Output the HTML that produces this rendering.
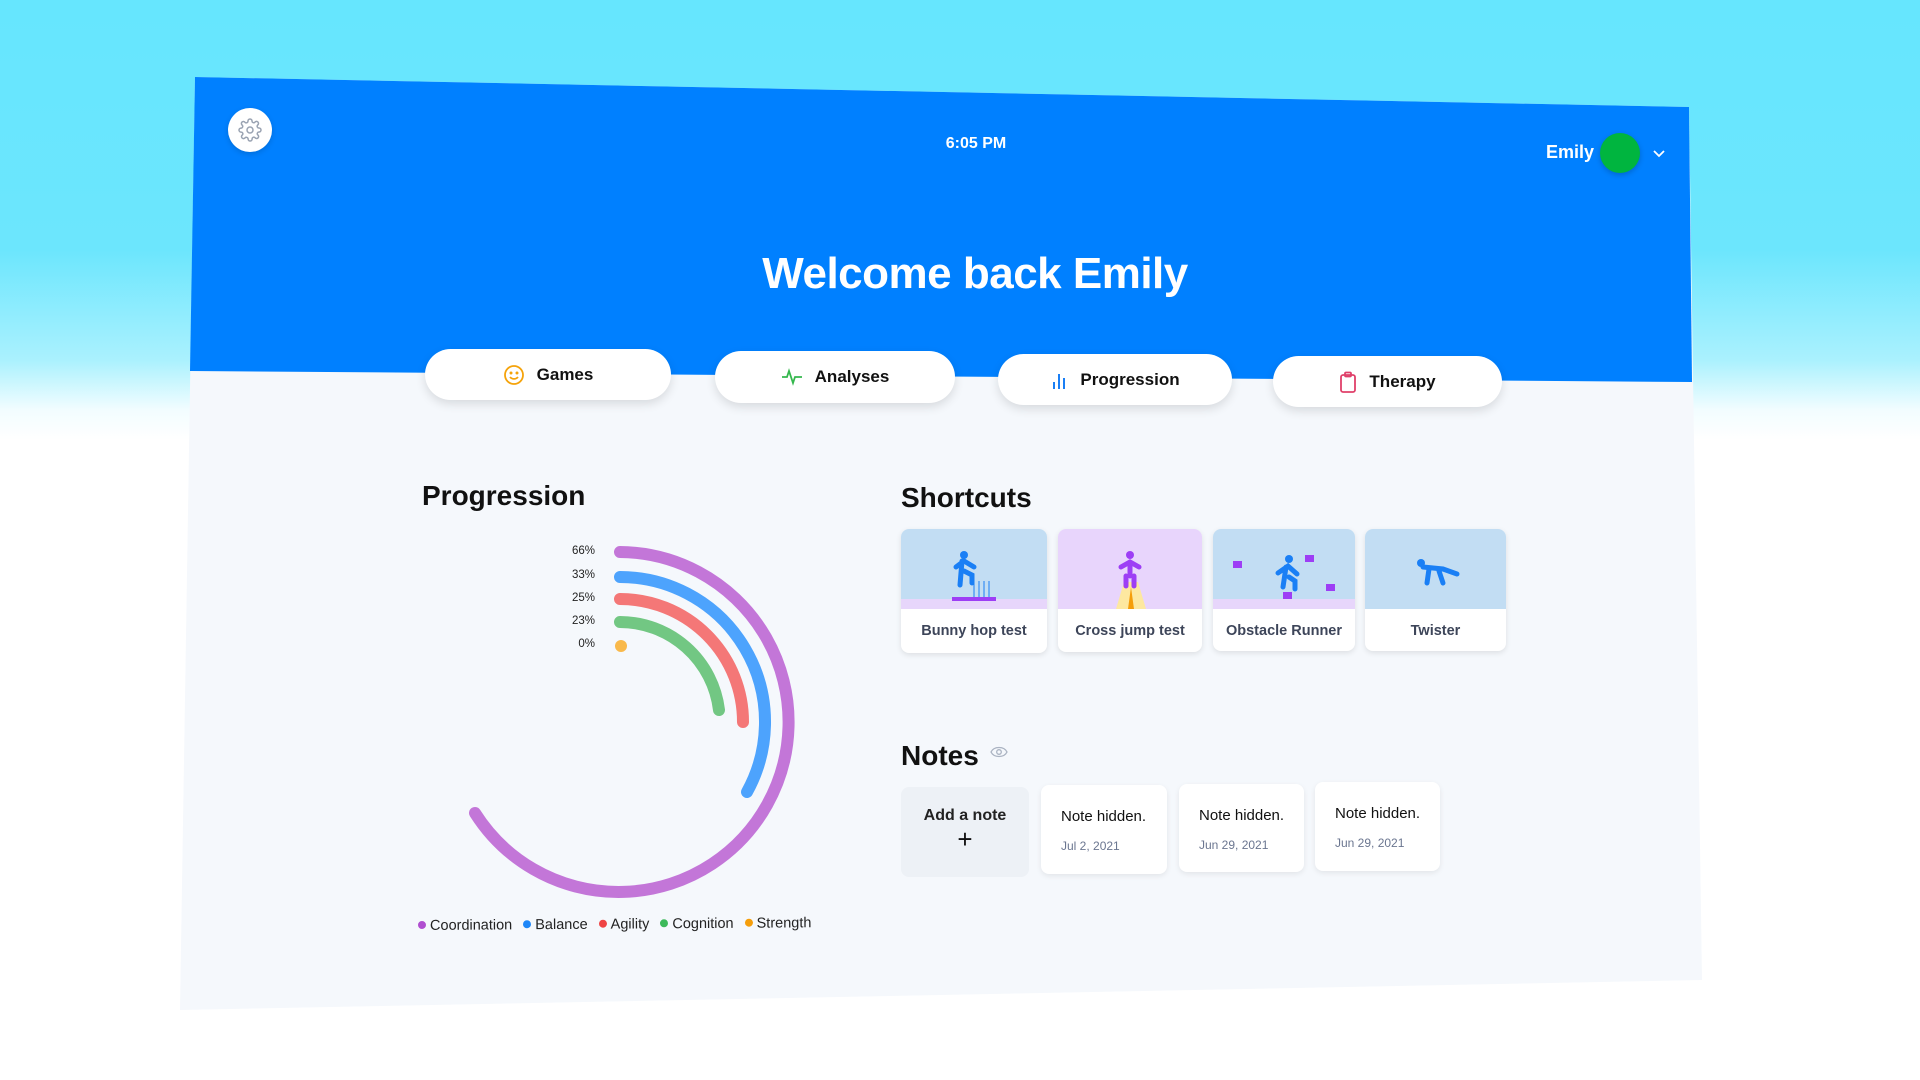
<!DOCTYPE html>
<html><head><meta charset="utf-8">
<style>
*{margin:0;padding:0;box-sizing:border-box}
html,body{width:1920px;height:1080px;overflow:hidden}
body{position:relative;font-family:"Liberation Sans",sans-serif;background:linear-gradient(180deg,#66e6fe 0px,#6ce6fd 250px,#aaf1fe 360px,#f2fdff 410px,#fff 440px,#fff 1080px);}
.abs{position:absolute}
#panel{left:0;top:0;width:1920px;height:1080px;background:#f5f8fc;clip-path:polygon(195px 77px,1689px 107px,1702px 980px,180px 1010px);}
#head{left:0;top:0;width:1920px;height:1080px;background:#0080ff;clip-path:polygon(195px 77px,1689px 107px,1692px 382px,190px 371px);}
.gear{left:228px;top:108px;width:44px;height:44px;border-radius:50%;background:#fff;box-shadow:0 2px 6px rgba(0,0,0,.15);display:flex;align-items:center;justify-content:center}
.time{left:900px;top:135px;width:152px;text-align:center;color:#fff;font-size:16px;font-weight:bold}
.emily{left:1546px;top:142px;color:#fff;font-size:18px;font-weight:bold}
.av{left:1600px;top:133px;width:40px;height:40px;border-radius:50%;background:#00b53f;box-shadow:0 2px 6px rgba(0,0,0,.2)}
.welcome{left:700px;top:249px;width:550px;text-align:center;color:#fff;font-size:44px;font-weight:bold;letter-spacing:-0.5px}
.tab{background:#fff;border-radius:26px;box-shadow:0 4px 10px rgba(0,0,0,.12);display:flex;align-items:center;justify-content:center;gap:12px;font-size:17px;font-weight:bold;color:#111}
h2{position:absolute;font-size:28px;font-weight:bold;color:#111}
.card{position:absolute;background:#fff;border-radius:8px;box-shadow:0 2px 6px rgba(0,0,0,.1);overflow:hidden}
.card .img{height:80px;position:relative}
.card .lbl{text-align:center;font-size:14.5px;font-weight:bold;color:#3d4559;padding-top:14px}
.note{position:absolute;background:#fff;border-radius:8px;box-shadow:0 2px 6px rgba(0,0,0,.08);padding:23px 0 0 20px}
.note .t{font-size:15px;color:#111}
.note .d{font-size:12px;color:#6b7690;margin-top:14px}
.pct{position:absolute;width:40px;text-align:right;font-size:11.5px;color:#222}
.leg{left:418px;top:918px;font-size:14.5px;color:#222;display:flex;gap:11px;transform:rotate(-0.4deg);transform-origin:left}
.leg span:before{content:"";display:inline-block;width:8px;height:8px;border-radius:50%;background:var(--c);margin-right:4px;vertical-align:1px}
</style></head><body>
<div id="panel" class="abs"></div>
<div id="head" class="abs"></div>

<div class="abs gear"><svg width="24" height="24" viewBox="0 0 24 24" fill="none" stroke="#9aa3b2" stroke-width="1.5"><circle cx="12" cy="12" r="3"/><path d="M19.4 15a1.7 1.7 0 0 0 .3 1.8l.1.1a2 2 0 1 1-2.8 2.8l-.1-.1a1.7 1.7 0 0 0-1.8-.3 1.7 1.7 0 0 0-1 1.5V21a2 2 0 1 1-4 0v-.1a1.7 1.7 0 0 0-1.100-1.5 1.7 1.7 0 0 0-1.8.3l-.1.1a2 2 0 1 1-2.8-2.8l.1-.1a1.7 1.7 0 0 0 .3-1.8 1.7 1.7 0 0 0-1.5-1H3a2 2 0 1 1 0-4h.1a1.7 1.7 0 0 0 1.5-1.100 1.7 1.7 0 0 0-.3-1.8l-.1-.1a2 2 0 1 1 2.8-2.8l.1.1a1.7 1.7 0 0 0 1.8.3H9a1.7 1.7 0 0 0 1-1.5V3a2 2 0 1 1 4 0v.1a1.7 1.7 0 0 0 1 1.5 1.7 1.7 0 0 0 1.8-.3l.1-.1a2 2 0 1 1 2.8 2.8l-.1.1a1.7 1.7 0 0 0-.3 1.8V9a1.7 1.7 0 0 0 1.5 1H21a2 2 0 1 1 0 4h-.1a1.7 1.7 0 0 0-1.5 1z"/></svg></div>
<div class="abs time">6:05 PM</div>
<div class="abs emily">Emily</div>
<div class="abs av"></div>
<svg class="abs" style="left:1652px;top:148px" width="14" height="10" viewBox="0 0 14 10"><path d="M2 3l5 5 5-5" stroke="#fff" stroke-width="1.8" fill="none"/></svg>
<div class="abs welcome">Welcome back Emily</div>

<div class="abs tab" style="left:425px;top:349px;width:246px;height:51px"><svg width="22" height="22" viewBox="0 0 22 22" fill="none" stroke="#f5a30a" stroke-width="1.8"><circle cx="11" cy="11" r="9"/><circle cx="8" cy="9" r=".6" fill="#f5a30a"/><circle cx="14" cy="9" r=".6" fill="#f5a30a"/><path d="M7 13c2 2.5 6 2.5 8 0"/></svg>Games</div>
<div class="abs tab" style="left:715px;top:351px;width:240px;height:52px"><svg width="22" height="22" viewBox="0 0 22 22" fill="none" stroke="#35b84e" stroke-width="1.8"><path d="M1 11h5l2-6 4 12 2-6h7"/></svg>Analyses</div>
<div class="abs tab" style="left:998px;top:354px;width:234px;height:51px"><svg width="18" height="20" viewBox="0 0 18 20" fill="none" stroke="#1a7ff5" stroke-width="2"><path d="M4 19v-7M9 19V4M14 19v-11"/></svg>Progression</div>
<div class="abs tab" style="left:1273px;top:356px;width:229px;height:51px"><svg width="18" height="22" viewBox="0 0 18 22" fill="none" stroke="#e0406a" stroke-width="1.8"><rect x="2" y="4" width="14" height="17" rx="2"/><rect x="6" y="1.5" width="6" height="4" rx="1"/></svg>Therapy</div>

<h2 style="left:422px;top:480px">Progression</h2>
<div class="pct" style="left:555px;top:545px">66%</div>
<div class="pct" style="left:555px;top:569px">33%</div>
<div class="pct" style="left:555px;top:592px">25%</div>
<div class="pct" style="left:555px;top:615px">23%</div>
<div class="pct" style="left:555px;top:638px">0%</div>
<svg class="abs" style="left:0;top:0" width="1920" height="1080" fill="none" stroke-linecap="round" stroke-width="12">
<path d="M620 552 A170 170 0 1 1 475 813" stroke="#c376d8"/>
<path d="M620 577 A145 145 0 0 1 747 792" stroke="#4da3fd"/>
<path d="M620 599 A123 123 0 0 1 743 722" stroke="#f47777"/>
<path d="M620 622 A100 100 0 0 1 719 710" stroke="#72c783"/>
<circle cx="621" cy="646" r="6" fill="#f9b94b" stroke="none"/>
</svg>
<div class="abs leg"><span style="--c:#b04fd0">Coordination</span><span style="--c:#1e87f8">Balance</span><span style="--c:#ef4444">Agility</span><span style="--c:#3cb95a">Cognition</span><span style="--c:#f59e0b">Strength</span></div>

<h2 style="left:901px;top:482px">Shortcuts</h2>
<div class="card" style="left:901px;top:529px;width:146px;height:124px"><div class="img" style="background:#c2ddf3"><div class="abs" style="left:0;bottom:0;width:100%;height:10px;background:#e7d6fb"></div>
<svg class="abs" style="left:45px;top:20px" width="60" height="55" viewBox="0 0 60 55"><circle cx="18" cy="6" r="4" fill="#1a7ff5"/><path d="M10 18l8-6 10 6M16 12l-2 24M18 22l8 4v8" stroke="#1a7ff5" stroke-width="5" fill="none" stroke-linecap="round"/><path d="M28 48V32M33 48V32M38 48V32M43 48V32" stroke="#1a7ff5" stroke-width="1"/><rect x="6" y="48" width="44" height="4" fill="#9d3ef5"/></svg></div><div class="lbl">Bunny hop test</div></div>
<div class="card" style="left:1058px;top:529px;width:144px;height:123px"><div class="img" style="background:#e8d5fc">
<svg class="abs" style="left:40px;top:20px" width="64" height="60" viewBox="0 0 64 60"><path d="M18 60l8-27h14l8 27z" fill="#fde8a0"/><path d="M30 60l3-22 3 22z" fill="#f59e0b"/><circle cx="32" cy="6" r="4" fill="#9d3ef5"/><path d="M23 18l9-5 9 5M32 13v14M28 27v10M36 27v10" stroke="#9d3ef5" stroke-width="5" fill="none" stroke-linecap="round"/></svg></div><div class="lbl">Cross jump test</div></div>
<div class="card" style="left:1213px;top:529px;width:142px;height:122px"><div class="img" style="background:#c2ddf3"><div class="abs" style="left:0;bottom:0;width:100%;height:10px;background:#e7d6fb"></div>
<svg class="abs" style="left:10px;top:20px" width="124" height="60" viewBox="0 0 124 60"><rect x="10" y="12" width="9" height="7" fill="#9d3ef5"/><rect x="82" y="6" width="9" height="7" fill="#9d3ef5"/><rect x="103" y="35" width="9" height="7" fill="#9d3ef5"/><rect x="60" y="43" width="9" height="7" fill="#9d3ef5"/><circle cx="66" cy="10" r="4" fill="#1a7ff5"/><path d="M55 24l10-7 9 8M63 18l-3 20M66 28l6 4v8" stroke="#1a7ff5" stroke-width="5" fill="none" stroke-linecap="round"/></svg></div><div class="lbl">Obstacle Runner</div></div>
<div class="card" style="left:1365px;top:529px;width:141px;height:122px"><div class="img" style="background:#c2ddf3">
<svg class="abs" style="left:50px;top:26px" width="50" height="40" viewBox="0 0 50 40"><circle cx="6" cy="8" r="4" fill="#1a7ff5"/><path d="M8 12l20 2 14 5M14 14l-2 14M24 16l4 12" stroke="#1a7ff5" stroke-width="5" fill="none" stroke-linecap="round"/></svg></div><div class="lbl">Twister</div></div>

<h2 style="left:901px;top:740px">Notes</h2>
<svg class="abs" style="left:990px;top:745px" width="18" height="14" viewBox="0 0 18 14" fill="none" stroke="#aab3c2" stroke-width="1.3"><path d="M1 7c3-6 13-6 16 0-3 6-13 6-16 0z"/><circle cx="9" cy="7" r="2.3"/></svg>
<div class="abs" style="left:901px;top:787px;width:128px;height:90px;background:#edf1f6;border-radius:8px;text-align:center;padding-top:20px"><div style="font-size:16px;font-weight:bold;color:#222">Add a note</div><div style="font-size:26px;color:#111;line-height:28px">+</div></div>
<div class="note" style="left:1041px;top:785px;width:126px;height:89px"><div class="t">Note hidden.</div><div class="d">Jul 2, 2021</div></div>
<div class="note" style="left:1179px;top:784px;width:125px;height:88px"><div class="t">Note hidden.</div><div class="d">Jun 29, 2021</div></div>
<div class="note" style="left:1315px;top:782px;width:125px;height:89px"><div class="t">Note hidden.</div><div class="d">Jun 29, 2021</div></div>
</body></html>
